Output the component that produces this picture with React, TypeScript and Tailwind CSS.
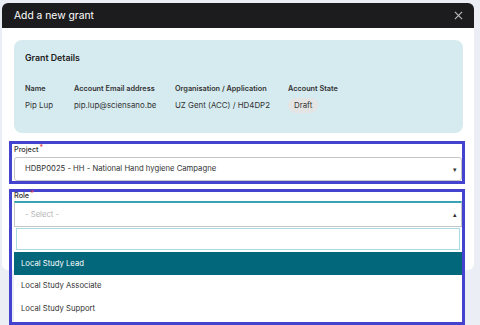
export default function App() {
  const options = ["Local Study Lead", "Local Study Associate", "Local Study Support"];

  return (
    <div className="min-h-[325px] w-[480px] bg-[#eceef6] pl-[2px] pt-[3px] font-['Inter',sans-serif] text-[#333]">
      {/* Modal */}
      <div className="h-[267px] w-[472px] rounded-md bg-white">
        {/* Header */}
        <div className="flex h-[25px] items-center justify-between rounded-t-md bg-[#1c1c1e] pl-3 pr-[11px]">
          <span className="text-[10.3px] text-white">Add a new grant</span>
          <svg width="9" height="9" viewBox="0 0 10 10" className="text-[#b9b9b9]">
            <path d="M1 1L9 9M9 1L1 9" stroke="currentColor" strokeWidth="1.3" />
          </svg>
        </div>

        {/* Body */}
        <div className="pl-[7px] pr-[9px] pt-3">
          {/* Grant details card */}
          <div className="ml-[5px] mr-[2px] h-[93px] rounded-lg bg-[#d6ebf0] px-[11px] pt-[11px]">
            <div className="text-[8.8px] font-semibold text-[#222]">Grant Details</div>
            <div className="mt-[20px] flex text-[7.3px] font-semibold text-[#333]">
              <div className="w-[49px]">Name</div>
              <div className="w-[101px]">Account Email address</div>
              <div className="w-[113px]">Organisation / Application</div>
              <div>Account State</div>
            </div>
            <div className="mt-[3px] flex items-center text-[7.9px] text-[#333]">
              <div className="w-[49px]">Pip Lup</div>
              <div className="w-[101px]">pip.lup@sciensano.be</div>
              <div className="w-[113px]">UZ Gent (ACC) / HD4DP2</div>
              <div className="rounded-full bg-[#e4e4e4] px-[6px] py-[1.5px]">Draft</div>
            </div>
          </div>

          {/* Project */}
          <div className="mt-2 border-[3px] border-[#4343cf] pl-[2px]">
            <div className="flex h-[13px] items-center text-[7.3px] font-medium text-[#333]">
              Project<span className="ml-[1px] -mt-[4px] text-[7px] text-[#e0393e]">*</span>
            </div>
            <div className="flex h-[24px] items-center justify-between rounded-[3px] border border-[#c6c6c6] pl-[10px] pr-[4px]">
              <span className="text-[7.7px] text-[#333]">HDBP0025 - HH - National Hand hygiene Campagne</span>
              <span className="text-[7px] leading-none text-[#333]">▾</span>
            </div>
          </div>

          {/* Role */}
          <div className="mt-[5px] border-[3px] border-[#4343cf] pl-[2px]">
            <div className="flex h-[9px] items-center text-[7.3px] font-medium text-[#333]">
              Role<span className="ml-[1px] -mt-[4px] text-[7px] text-[#e0393e]">*</span>
            </div>
            <div className="flex h-[26px] items-center justify-between border-t-2 border-x border-b border-t-[#3aa3b3] border-x-[#c6c6c6] border-b-[#c6c6c6] pl-[10px] pr-[4px]">
              <span className="text-[7.7px] text-[#b5b5b5]">- Select -</span>
              <span className="text-[7px] leading-none text-[#333]">▴</span>
            </div>
            <div className="bg-white">
              <div className="px-[2px] pt-[1px] pb-[2px]">
                <div className="h-[22px] border border-[#a9dbe2]" />
              </div>
              {options.map((o, i) => (
                <div
                  key={o}
                  className={
                    i === 0
                      ? "flex h-[23px] items-center bg-[#02677a] pl-[7px] text-[7.7px] text-white"
                      : "flex h-[22.5px] items-center pl-[7px] text-[7.7px] text-[#333]"
                  }
                >
                  {o}
                </div>
              ))}
              <div className="h-[2px]" />
            </div>
          </div>
        </div>
      </div>
    </div>
  );
}
